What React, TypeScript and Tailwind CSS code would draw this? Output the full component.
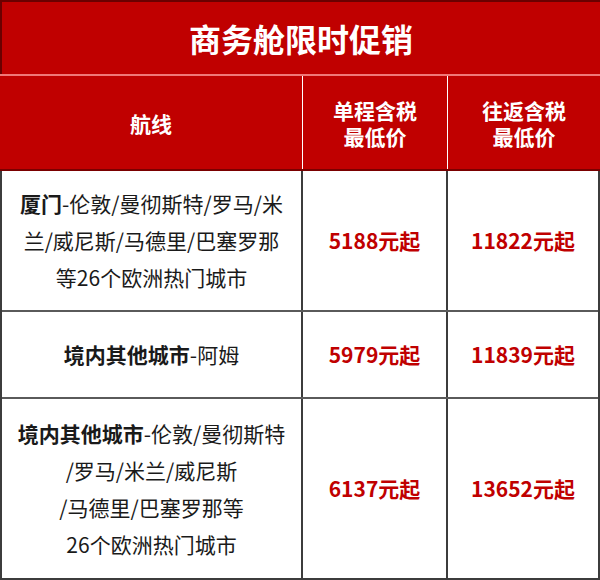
const rows = [
  {
    h: "h-[141px]",
    lead: "厦门",
    lines: ["-伦敦/曼彻斯特/罗马/米", "兰/威尼斯/马德里/巴塞罗那", "等26个欧洲热门城市"],
    oneWay: "5188元起",
    round: "11822元起",
  },
  {
    h: "h-[87px]",
    lead: "境内其他城市",
    lines: ["-阿姆"],
    oneWay: "5979元起",
    round: "11839元起",
  },
  {
    h: "h-[179px]",
    lead: "境内其他城市",
    lines: ["-伦敦/曼彻斯特", "/罗马/米兰/威尼斯", "/马德里/巴塞罗那等", "26个欧洲热门城市"],
    oneWay: "6137元起",
    round: "13652元起",
  },
];

export default function App() {
  return (
    <div className="w-[600px] h-[580px] bg-white font-['Microsoft_YaHei','Noto_Sans_CJK_SC',sans-serif]">
      <div className="w-[600px] border-l-2 border-r-2 border-b-2 border-[#3c3c3c]">
        <div className="-mx-[2px] border-t-2 border-l-2 border-[#6a0000] bg-[#c00000] h-[74px] flex items-center justify-center text-white text-[32px] font-bold">
          商务舱限时促销
        </div>
        <div className="-mx-[2px] h-[2px] bg-[#f07878]" />
        <div className="-mx-[2px] grid grid-cols-[303px_145px_1fr] h-[95px] bg-[#c00000] border-b-2 border-[#7a0000] text-white text-[21px] font-bold leading-[26px]">
          <div className="flex items-center justify-center border-r border-white">航线</div>
          <div className="flex flex-col items-center justify-center border-r border-white">
            <span>单程含税</span>
            <span>最低价</span>
          </div>
          <div className="flex flex-col items-center justify-center">
            <span>往返含税</span>
            <span>最低价</span>
          </div>
        </div>
        {rows.map((r, i) => (
          <div
            key={i}
            className={`grid grid-cols-[301px_145px_1fr] ${r.h} ${i < rows.length - 1 ? "border-b-2 border-[#5a5a5a]" : ""}`}
          >
            <div className="flex flex-col items-center justify-center text-center border-r-2 border-[#3c3c3c] text-[21px] leading-[37px] text-[#1a1a1a]">
              {r.lines.map((l, j) => (
                <div key={j} className="whitespace-nowrap">
                  {j === 0 && <span className="font-bold">{r.lead}</span>}
                  {l}
                </div>
              ))}
            </div>
            <div className="flex items-center justify-center border-r-2 border-[#3c3c3c] text-[21px] font-bold text-[#c00000]">
              {r.oneWay}
            </div>
            <div className="flex items-center justify-center text-[21px] font-bold text-[#c00000]">
              {r.round}
            </div>
          </div>
        ))}
      </div>
    </div>
  );
}
